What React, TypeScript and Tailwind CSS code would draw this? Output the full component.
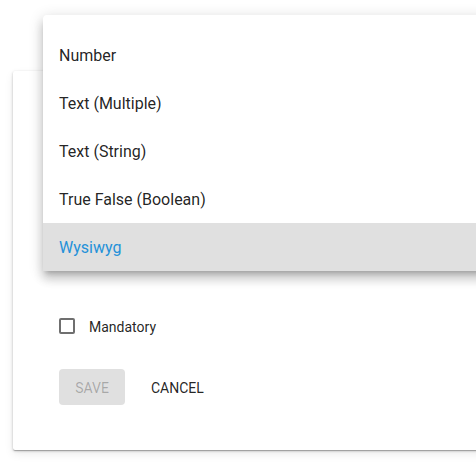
const options = [
  "Number",
  "Text (Multiple)",
  "Text (String)",
  "True False (Boolean)",
  "Wysiwyg",
]

export default function App() {
  return (
    <div className="relative w-[476px] h-[463px] overflow-hidden bg-white font-['Roboto',sans-serif]">
      {/* dialog */}
      <div className="ml-[13px] mt-[71px] w-[520px] h-[379px] bg-white rounded-[2px] shadow-[0_1px_3px_rgba(0,0,0,0.2),0_1px_1px_rgba(0,0,0,0.14),0_2px_1px_-1px_rgba(0,0,0,0.12),0_4px_10px_rgba(0,0,0,0.08)] pl-[46px] pt-[243px]">
        <label className="flex items-center h-6 gap-[14px]">
          <span className="w-[16px] h-[16px] rounded-[2px] border-2 border-[#6f6f6f]" />
          <span className="text-sm text-[rgba(0,0,0,0.87)] pt-[2px]">Mandatory</span>
        </label>
        <div className="flex items-center gap-[10px] mt-[31px]">
          <button className="h-9 w-[66px] pt-px rounded-[4px] bg-[#e0e0e0] text-sm font-normal uppercase text-[rgba(0,0,0,0.26)]">
            Save
          </button>
          <button className="h-9 px-4 pt-px rounded-[4px] text-sm font-normal uppercase text-[rgba(0,0,0,0.87)]">
            Cancel
          </button>
        </div>
      </div>

      {/* select menu */}
      <ul className="absolute left-[43px] top-[15px] w-[460px] pt-4 bg-white rounded-[4px] shadow-[0_5px_5px_-3px_rgba(0,0,0,0.2),0_8px_10px_1px_rgba(0,0,0,0.14),0_3px_14px_2px_rgba(0,0,0,0.12)]">
        {options.map((o, i) => (
          <li
            key={o}
            className={
              i === options.length - 1
                ? "h-12 flex items-center px-4 pt-[2px] text-base bg-[#e0e0e0] text-[#2491d9]"
                : "h-12 flex items-center px-4 pt-[2px] text-base text-[rgba(0,0,0,0.87)]"
            }
          >
            {o}
          </li>
        ))}
      </ul>
    </div>
  )
}
